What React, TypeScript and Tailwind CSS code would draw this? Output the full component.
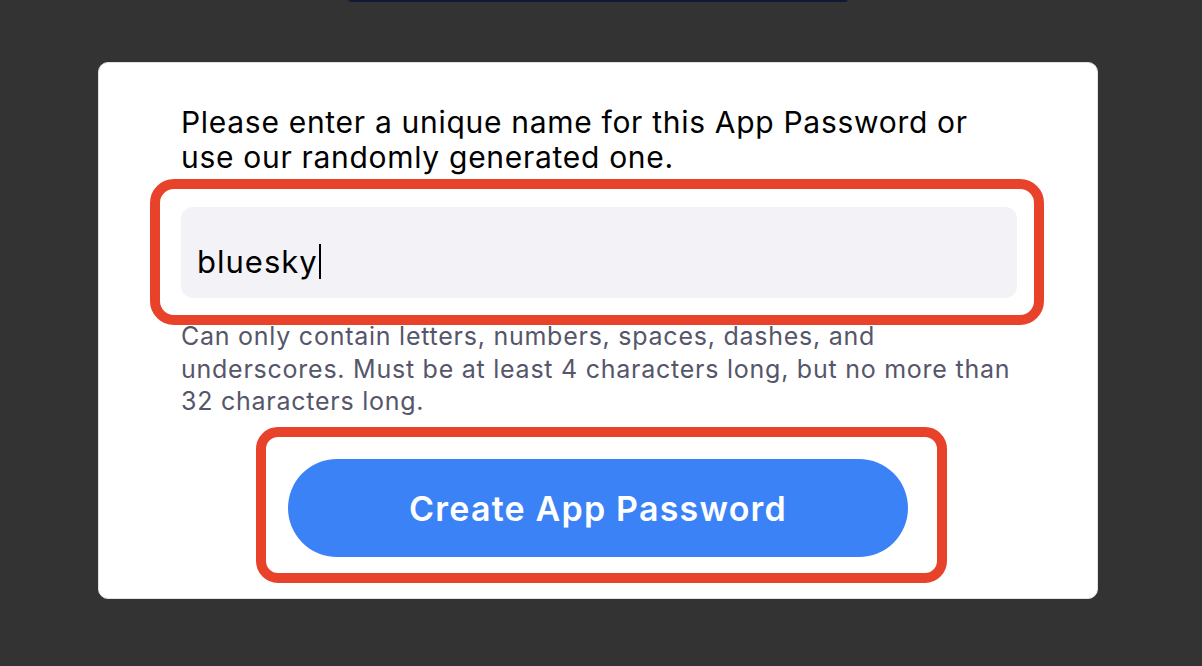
import * as React from 'react';

export default function App() {
  return (
    <div className="h-[666px] w-[1202px] overflow-hidden bg-[#333333] font-['Inter','Noto_Sans',sans-serif]">
      {/* bottom edge of a control scrolled off the top */}
      <div className="ml-[348px] h-[3px] w-[500px] -translate-y-px rounded-b-[14px] bg-[#0f1b35]" />

      <div className="ml-[98px] mt-[59px] h-[537px] w-[1000px] rounded-[10px] border border-[#e4e0e0] bg-white pl-[82px] pt-[42px]">
        <p className="text-[30px] leading-[35px] tracking-[0.7px] text-black">
          Please enter a unique name for this App Password or
          <br />
          use our randomly generated one.
        </p>

        <div className="relative mt-[32px] flex h-[91px] w-[836px] items-center rounded-[12px] bg-[#f2f2f7] pl-[16px] pt-[18px]">
          <span className="text-[31px] leading-[35px] tracking-[1px] text-black">bluesky</span>
          <span className="ml-[1px] h-[35px] w-[2px] bg-black" />
          <div className="pointer-events-none absolute -top-[28px] -left-[31px] -right-[27px] -bottom-[27px] rounded-[24px] border-[10px] border-[#e9422b]" />
        </div>

        <p className="mt-[22px] w-[880px] text-[25px] leading-[32.5px] tracking-[0.75px] text-[#56566a]">
          Can only contain letters, numbers, spaces, dashes, and
          <br />
          underscores. Must be at least 4 characters long, but no more than
          <br />
          32 characters long.
        </p>

        <div className="relative ml-[107px] mt-[41px] w-[620px]">
          <button className="flex h-[98px] w-[620px] items-center justify-center rounded-full bg-[#3b82f6] pt-[2px] text-[34px] font-semibold tracking-[1.2px] text-white">
            Create App Password
          </button>
          <div className="pointer-events-none absolute -top-[32px] -left-[32px] -right-[39px] -bottom-[26px] rounded-[22px] border-[10px] border-[#e9422b]" />
        </div>
      </div>
    </div>
  );
}
